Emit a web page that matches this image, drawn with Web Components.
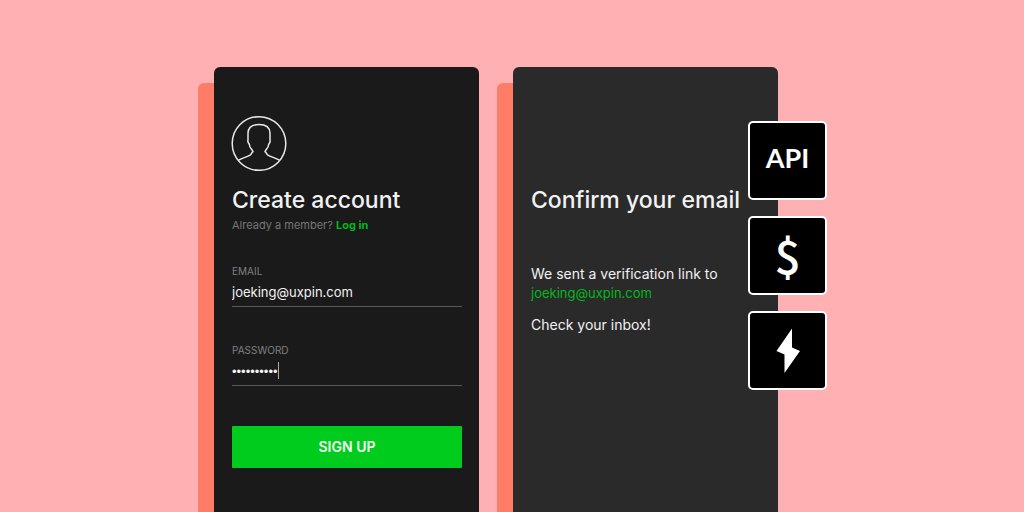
<!DOCTYPE html>
<html lang="en">
<head>
<meta charset="utf-8">
<meta name="viewport" content="width=device-width, initial-scale=1">
<title>Create account</title>
<style>
  body { margin: 0; background: #ffb0b3; font-family: Inter, "Liberation Sans", sans-serif; }
</style>
</head>
<body>
<signup-flow>
  <phone-card tone="dark">
    <user-avatar></user-avatar>
    <card-heading>Create account</card-heading>
    <member-hint>Already a member?</member-hint>
    <signup-form></signup-form>
  </phone-card>
  <phone-card tone="soft">
    <confirm-message email="joeking@uxpin.com"></confirm-message>
    <tile-stack slot="overlay">
      <feature-tile>API</feature-tile>
      <feature-tile kind="dollar">$</feature-tile>
      <feature-tile kind="icon">
        <svg width="24" height="46" viewBox="0 0 24 46" role="img" aria-label="Power"><path d="M16 0.500V19.500L24 23L8.500 45V26.500L0.500 23Z" fill="#fff"/></svg>
      </feature-tile>
    </tile-stack>
  </phone-card>
</signup-flow>

<script>
  const define = (name, markup, setup) => {
    const template = document.createElement('template');
    template.innerHTML = markup;
    customElements.define(name, class extends HTMLElement {
      constructor() {
        super();
        this.attachShadow({ mode: 'open' }).append(template.content.cloneNode(true));
      }
      connectedCallback() { if (setup) setup(this, this.shadowRoot); }
    });
  };

  define('signup-flow', `
    <style>
      :host { display: flex; justify-content: center; box-sizing: border-box; min-height: 100vh; padding-top: 67px; overflow: hidden; }
      main { display: grid; grid-template-columns: 1fr 1fr; gap: 34px; width: 100%; max-width: 564px; padding: 0 48px 0 16px; }
    </style>
    <main><slot></slot></main>`);

  define('phone-card', `
    <style>
      :host { display: block; position: relative; z-index: 0; color: #f2f2f2; }
      :host::before { content: ""; position: absolute; z-index: -1; inset: 16px 16px 0 -16px; border-radius: 6px 6px 0 0; background: #ff7d66; }
      section { box-sizing: border-box; height: 100%; padding: 48px 17px 44px 18px; border-radius: 6px 6px 0 0; background: #1a1a1a; }
      :host([tone="soft"]) section { background: #2a2a2a; }
    </style>
    <section><slot></slot></section><slot name="overlay"></slot>`);

  define('user-avatar', `
    <style>
      :host { display: block; margin: 0 0 12px -1px; }
      svg { display: block; }
    </style>
    <svg width="56" height="56" viewBox="0 0 56 56" fill="none" stroke="#e8e8e8" stroke-width="1.5" role="img" aria-label="Profile">
      <circle cx="28" cy="28.500" r="26.800"/>
      <path d="M7.500 45.200C11 43.200 16.500 41.800 19.500 39.800C20.500 39 20.200 38 22 36.700C21.500 34.800 20 34 18.800 31.500C18.500 30.500 18.800 29.500 17.800 28.500C16.800 27 16.600 26 17 25V18C17.200 12 21.500 9.500 28 9.500S38.800 12 39 18V25C39.400 26 39.200 27 38.200 28.500C37.200 29.500 37.500 30.500 37.200 31.500C36 34 34.500 34.800 34 36.700C35.800 38 35.500 39 36.500 39.800C39.500 41.800 45 43.200 48.500 45.200"/>
    </svg>`);

  define('card-heading', `
    <style>
      :host { display: block; }
      h1 { margin: 0; font-size: 23px; font-weight: 500; line-height: 34px; white-space: nowrap; }
    </style>
    <h1><slot></slot></h1>`);

  define('member-hint', `
    <style>
      :host { display: block; font-size: 11px; line-height: 17px; color: #777; }
      p { margin: 0; }
      a { color: #00b81b; font-weight: 700; text-decoration: none; }
    </style>
    <p><slot></slot> <a href="#login">Log in</a></p>`);

  define('form-field', `
    <style>
      :host { display: block; position: relative; border-bottom: 1px solid #585858; }
      label { display: block; font-size: 10px; line-height: 14px; color: #808080; }
      input { display: block; box-sizing: border-box; width: 100%; height: 28px; padding: 0; border: 0; outline: 0; background: none; color: #f2f2f2; font: 13px Inter, "Liberation Sans", sans-serif; }
      input[type="password"] { font-family: "Liberation Sans", sans-serif; }
      i { display: none; position: absolute; left: 46px; bottom: 6px; width: 1px; height: 17px; background: #aaa; }
      :host([active]) i { display: block; }
    </style>
    <label for="control"></label><input id="control"><i></i>`,
    (host, root) => {
      root.querySelector('label').textContent = host.getAttribute('label');
      const input = root.querySelector('input');
      input.type = host.getAttribute('type');
      input.value = host.getAttribute('value');
    });

  define('signup-form', `
    <style>
      :host { display: block; margin-top: 30px; }
      form { display: grid; gap: 36px; }
      button { height: 42px; margin-top: 4px; padding: 0 0 2px; border: 0; border-radius: 1px; background: #00cc1e; color: #f4fff5; font: 600 14px Inter, "Liberation Sans", sans-serif; }
    </style>
    <form>
      <form-field label="EMAIL" type="email" value="joeking@uxpin.com"></form-field>
      <form-field label="PASSWORD" type="password" value="sketchpads" active></form-field>
      <button type="button">SIGN UP</button>
    </form>`);

  define('confirm-message', `
    <style>
      :host { display: block; padding-top: 68px; font-size: 14px; line-height: 19px; }
      p { margin: 0; white-space: nowrap; }
      .sent { margin-top: 47px; }
      a { color: #00b81b; font-size: 13px; text-decoration: none; }
      .inbox { margin-top: 12px; }
    </style>
    <card-heading>Confirm your email</card-heading>
    <p class="sent">We sent a verification link to</p>
    <p><a></a></p>
    <p class="inbox">Check your inbox!</p>`,
    (host, root) => {
      const email = host.getAttribute('email');
      const link = root.querySelector('a');
      link.textContent = email;
      link.href = 'mailto:' + email;
    });

  define('tile-stack', `
    <style>
      :host { position: absolute; top: 54px; left: calc(100% - 30px); display: grid; gap: 16px; }
    </style>
    <slot></slot>`);

  define('feature-tile', `
    <style>
      :host { display: flex; align-items: center; justify-content: center; box-sizing: border-box; width: 79px; height: 79px; padding-bottom: 6px; border: 2px solid #fff; border-radius: 5px; background: #000; color: #fff; font: 700 27px/32px Lato, sans-serif; }
      :host([kind="dollar"]) { padding-bottom: 4px; font: 500 46px/46px "Noto Sans CJK SC", sans-serif; }
      :host([kind="icon"]) { padding-bottom: 0; }
    </style>
    <slot></slot>`);
</script>
</body>
</html>
